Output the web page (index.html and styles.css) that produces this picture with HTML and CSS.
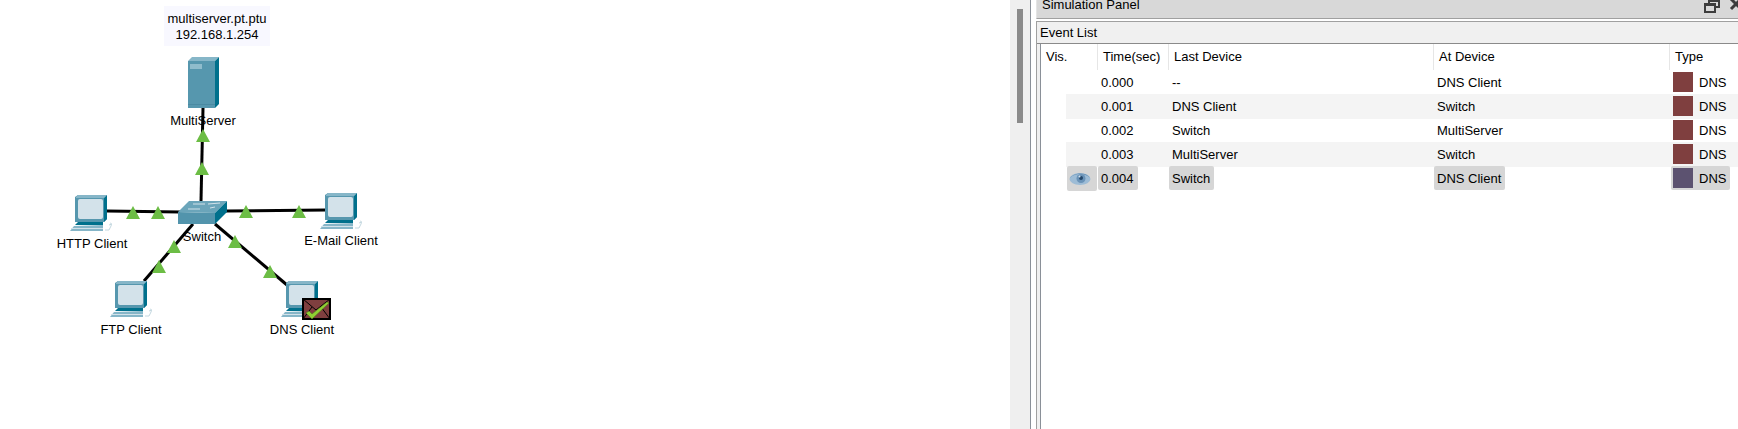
FILE: index.html
```html
<!DOCTYPE html>
<html lang="en">
<head>
    <meta charset="UTF-8">
    <title>Simulation Panel</title>
    <link rel="stylesheet" href="styles.css">
</head>
<body>
    <div class="app">
        <!-- Logical workspace -->
        <div class="canvas">
            <svg class="topology" width="1010" height="429" viewBox="0 0 1010 429">
                <defs>
                    <g id="pc">
                        <polygon points="0,2 3,0 32,0 32,24 29,27 0,27" fill="#5697ae"/>
                        <polygon points="29,3 32,0 32,24 29,27" fill="#00708c"/>
                        <polygon points="1,2 3,0 32,0 29,3 1,3" fill="#86b6c8"/>
                        <rect x="3" y="4" width="25" height="20" rx="2" fill="#d3e2ea"/>
                        <polygon points="3,27 28,27 28,30 0,30" fill="#00708c"/>
                        <polygon points="-1,31 28,30 28,36 -5,36" fill="#86b6c8"/>
                        <rect x="-4" y="33" width="32" height="1" fill="#d3e2ea"/>
                        <path d="M30 35h4l2-4c1-2 0-3-1-3M34 30l3-1" fill="none" stroke="#c4d8e0" stroke-width="1"/>
                    </g>
                    <polygon id="arrow" points="7,0 14,13 0,13" fill="#6cbd45"/>
                </defs>

                <g stroke="#000" stroke-width="3" fill="none">
                    <line x1="203" y1="108" x2="201" y2="201"/>
                    <line x1="107" y1="211" x2="180" y2="212"/>
                    <line x1="226" y1="211" x2="326" y2="210"/>
                    <line x1="193" y1="224" x2="144" y2="281"/>
                    <line x1="215" y1="224" x2="287" y2="285"/>
                </g>

                <!-- MultiServer -->
                <polygon points="188,61 215,61 215,108 188,108" fill="#5697ae"/>
                <polygon points="188,61 192,57 219,57 215,61" fill="#86b6c8"/>
                <polygon points="215,61 219,57 219,104 215,108" fill="#00708c"/>
                <rect x="190" y="64" width="12" height="5" fill="#8fbccc"/>
                <rect x="188" y="104" width="27" height="1" fill="#4a8aa2"/>

                <!-- Switch -->
                <polygon points="178,212 189,201 227,201 215,213" fill="#6ba5ba"/>
                <polygon points="178,212 215,213 215,224 178,224" fill="#5294ac"/>
                <polygon points="215,213 227,201 227,212 215,224" fill="#00708c"/>
                <g stroke="#d3e2ea" stroke-width="1">
                    <line x1="193" y1="204" x2="205" y2="204"/>
                    <line x1="208" y1="204" x2="220" y2="203"/>
                    <line x1="188" y1="209" x2="200" y2="209"/>
                    <line x1="210" y1="208" x2="215" y2="207"/>
                </g>

                <use href="#pc" x="75" y="195"/>
                <use href="#pc" x="325" y="193"/>
                <use href="#pc" x="115" y="281"/>
                <use href="#pc" x="286" y="281"/>

                <use href="#arrow" x="196" y="129"/>
                <use href="#arrow" x="195" y="162"/>
                <use href="#arrow" x="126" y="206"/>
                <use href="#arrow" x="151" y="206"/>
                <use href="#arrow" x="239" y="205"/>
                <use href="#arrow" x="292" y="205"/>
                <use href="#arrow" x="167" y="240"/>
                <use href="#arrow" x="152" y="260"/>
                <use href="#arrow" x="228" y="235"/>
                <use href="#arrow" x="263" y="265"/>

                <!-- PDU on the DNS client -->
                <rect x="303" y="299" width="27" height="20" fill="#7f3f3f" stroke="#000" stroke-width="2"/>
                <path d="M303 299l13 11 14-11M303 319l9-12M330 319l-9-12" fill="none" stroke="#000" stroke-width="1"/>
                <polygon points="306,313 309,311 312,314 327,302 329,303 312,319" fill="#8fd033" stroke="#4c7a18" stroke-width="0.5"/>
            </svg>

            <div class="tooltip">multiserver.pt.ptu<br>192.168.1.254</div>
            <span class="label label-server">MultiServer</span>
            <span class="label label-switch">Switch</span>
            <span class="label label-http">HTTP Client</span>
            <span class="label label-email">E-Mail Client</span>
            <span class="label label-ftp">FTP Client</span>
            <span class="label label-dns">DNS Client</span>
        </div>

        <div class="scrollbar"><div class="scrollbar-thumb"></div></div>

        <!-- Simulation panel -->
        <div class="panel">
            <div class="panel-title">
                <span>Simulation Panel</span>
                <div class="panel-icons">
                    <svg width="16" height="13" viewBox="0 0 16 13">
                        <path d="M5 3V1h10v6h-4" fill="none" stroke="#3c3c3c" stroke-width="2"/>
                        <rect x="1" y="4" width="10" height="8" fill="none" stroke="#3c3c3c" stroke-width="2"/>
                        <rect x="1" y="3" width="10" height="3" fill="#3c3c3c"/>
                    </svg>
                    <svg width="12" height="13" viewBox="0 0 12 13">
                        <path d="M2 -1l10 10M12 -1L2 9" stroke="#3c3c3c" stroke-width="3" fill="none"/>
                    </svg>
                </div>
            </div>
            <div class="event-box">
                <div class="event-title">Event List</div>
                <div class="event-table">
                    <div class="row head">
                        <div class="th">Vis.</div>
                        <div class="th">Time(sec)</div>
                        <div class="th">Last Device</div>
                        <div class="th">At Device</div>
                        <div class="th">Type</div>
                    </div>
                    <div class="row">
                        <div class="vis"></div>
                        <div class="cell"><span>0.000</span></div>
                        <div class="cell"><span>--</span></div>
                        <div class="cell"><span>DNS Client</span></div>
                        <div class="cell"><span class="type"><i class="swatch"></i>DNS</span></div>
                    </div>
                    <div class="row alt">
                        <div class="vis"></div>
                        <div class="cell"><span>0.001</span></div>
                        <div class="cell"><span>DNS Client</span></div>
                        <div class="cell"><span>Switch</span></div>
                        <div class="cell"><span class="type"><i class="swatch"></i>DNS</span></div>
                    </div>
                    <div class="row">
                        <div class="vis"></div>
                        <div class="cell"><span>0.002</span></div>
                        <div class="cell"><span>Switch</span></div>
                        <div class="cell"><span>MultiServer</span></div>
                        <div class="cell"><span class="type"><i class="swatch"></i>DNS</span></div>
                    </div>
                    <div class="row alt">
                        <div class="vis"></div>
                        <div class="cell"><span>0.003</span></div>
                        <div class="cell"><span>MultiServer</span></div>
                        <div class="cell"><span>Switch</span></div>
                        <div class="cell"><span class="type"><i class="swatch"></i>DNS</span></div>
                    </div>
                    <div class="row current">
                        <div class="vis">
                            <svg width="22" height="14" viewBox="0 0 22 14">
                                <ellipse cx="11" cy="7" rx="10.5" ry="6" fill="#9dbcd6"/>
                                <path d="M1 6c3-5 16-7 20 0-3-3-6-4-10-4S4 3 1 6z" fill="#5f8ab0"/>
                                <circle cx="12" cy="6.5" r="4.5" fill="#6a93b8"/>
                                <circle cx="12" cy="6" r="2" fill="#24486c"/>
                                <circle cx="10.5" cy="4.5" r="1" fill="#d4e2ee"/>
                            </svg>
                        </div>
                        <div class="cell"><span>0.004</span></div>
                        <div class="cell"><span>Switch</span></div>
                        <div class="cell"><span>DNS Client</span></div>
                        <div class="cell"><span class="type"><i class="swatch"></i>DNS</span></div>
                    </div>
                </div>
            </div>
        </div>
    </div>
</body>
</html>
```

FILE: styles.css
```css
html, body {
    margin: 0;
    padding: 0;
    height: 100%;
    overflow: hidden;
    background-color: #fff;
}
body {
    font-family: "Liberation Sans", Arial, sans-serif;
    font-size: 13px;
    color: #000;
}
.app {
    display: flex;
    height: 429px;
}

/* workspace */
.canvas {
    position: relative;
    flex: 0 0 1010px;
    height: 429px;
    overflow: hidden;
}
.topology {
    display: block;
}
.tooltip {
    position: absolute;
    left: 164px;
    top: 6px;
    width: 106px;
    height: 40px;
    box-sizing: border-box;
    padding-top: 5px;
    background-color: #f8f8ff;
    line-height: 16px;
    text-align: center;
}
.label {
    position: absolute;
    line-height: 16px;
    white-space: nowrap;
    transform: translateX(-50%);
}
.label-server { left: 203px; top: 113px; }
.label-switch { left: 202px; top: 229px; }
.label-http   { left: 92px;  top: 236px; }
.label-email  { left: 341px; top: 233px; }
.label-ftp    { left: 131px; top: 322px; }
.label-dns    { left: 302px; top: 322px; }

.scrollbar {
    flex: 0 0 20px;
    background-color: #efefef;
}
.scrollbar-thumb {
    width: 6px;
    height: 114px;
    margin: 9px 0 0 7px;
    background-color: #8a8a8a;
}

/* simulation panel */
.panel {
    flex: 1;
    min-width: 0;
    padding-left: 5px;
    border-left: 1px solid #8a9098;
}
.panel-title {
    display: flex;
    justify-content: space-between;
    height: 18px;
    padding-left: 5px;
    background-color: #d8d8d8;
    border-bottom: 1px solid #a0a0a0;
    border-left: 1px solid #e4e4e4;
    box-sizing: content-box;
    line-height: 9px;
    overflow: hidden;
}
.panel-icons {
    display: flex;
    align-items: flex-start;
    gap: 9px;
    margin-right: -3px;
}
.event-box {
    display: flex;
    flex-direction: column;
    height: 408px;
    margin-top: 2px;
    background-color: #f0f0f0;
    border-top: 1px solid #a0a0a0;
    border-left: 1px solid #a0a0a0;
}
.event-title {
    height: 21px;
    padding-left: 3px;
    line-height: 22px;
    border-bottom: 1px solid #8a8a8a;
}
.event-table {
    flex: 1;
    margin-left: 3px;
    background-color: #fff;
    border-left: 1px solid #8a9098;
}
.row {
    display: grid;
    grid-template-columns: 56px 71px 265px 236px 1fr;
    height: 24px;
    line-height: 25px;
}
.row.head {
    height: 26px;
    line-height: 26px;
}
.th {
    padding-left: 5px;
    border-left: 1px solid #e6e6e6;
}
.th:first-child {
    border-left: none;
}
.vis {
    margin-left: 25px;
    display: flex;
    align-items: center;
    padding-left: 1px;
}
.cell span {
    display: inline-block;
    height: 24px;
    margin-left: 1px;
    padding: 0 4px 0 3px;
    border-radius: 2px;
    vertical-align: top;
}
.cell .type {
    display: inline-flex;
    align-items: center;
    gap: 6px;
    margin-left: 2px;
    padding: 0 4px 0 2px;
}
.swatch {
    display: block;
    width: 20px;
    height: 20px;
    background-color: #7f3f3f;
}
.row.alt .vis, .row.alt .cell {
    background-color: #f4f4f4;
}
.row.current .vis {
    width: 30px;
    margin-left: 26px;
    padding-left: 2px;
    box-sizing: border-box;
    background-color: #d6d6d6;
    border-radius: 2px;
}
.row.current .cell span {
    background-color: #d6d6d6;
}
.row.current .swatch {
    background-color: #5c5270;
}
```
